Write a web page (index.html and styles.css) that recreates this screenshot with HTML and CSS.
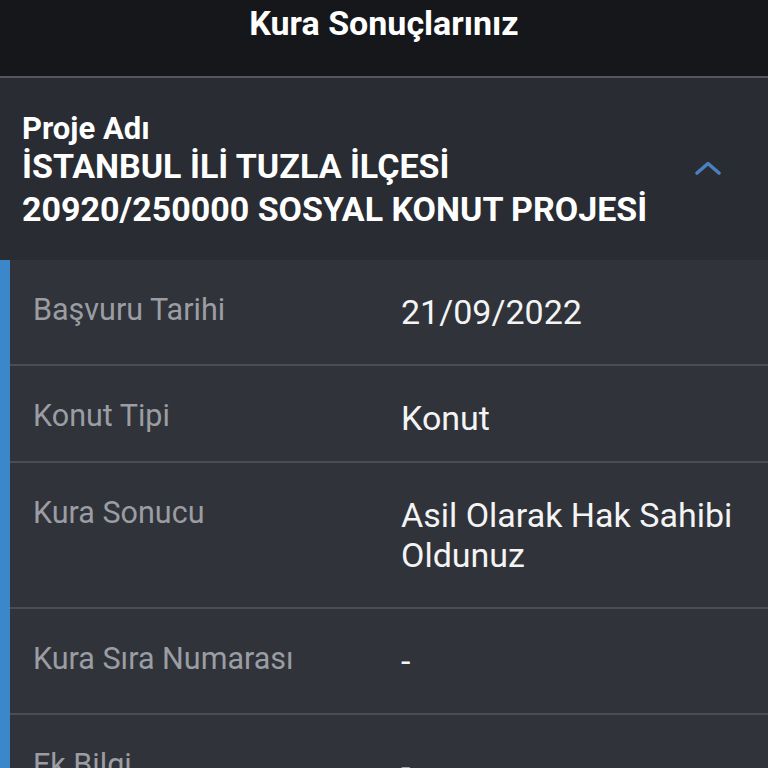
FILE: index.html
```html
<!DOCTYPE html>
<html lang="tr">
<head>
<meta charset="utf-8">
<title>Kura Sonuçlarınız</title>
<link rel="stylesheet" href="styles.css">
</head>
<body>
<header class="topbar">
  <h1 class="topbar-title">Kura Sonuçlarınız</h1>
</header>
<section class="project">
  <div class="project-text">
    <div class="project-label">Proje Adı</div>
    <div class="project-name">İSTANBUL İLİ TUZLA İLÇESİ<br>20920/250000 SOSYAL KONUT PROJESİ</div>
  </div>
  <svg class="chevron" width="28" height="16" viewBox="0 0 28 16" aria-hidden="true">
    <path d="M3 13 L14 3.5 L25 13" fill="none" stroke="#4a80bf" stroke-width="3.6" stroke-linecap="round" stroke-linejoin="round"/>
  </svg>
</section>
<section class="details">
  <div class="row">
    <div class="label">Başvuru Tarihi</div>
    <div class="value">21/09/2022</div>
  </div>
  <div class="row row--tight">
    <div class="label">Konut Tipi</div>
    <div class="value">Konut</div>
  </div>
  <div class="row">
    <div class="label">Kura Sonucu</div>
    <div class="value">Asil Olarak Hak Sahibi Oldunuz</div>
  </div>
  <div class="row">
    <div class="label">Kura Sıra Numarası</div>
    <div class="value">-</div>
  </div>
  <div class="row">
    <div class="label">Ek Bilgi</div>
    <div class="value">-</div>
  </div>
</section>
</body>
</html>
```

FILE: styles.css
```css
html, body {
  margin: 0;
  padding: 0;
  background: #30333a;
  font-family: Roboto, "Noto Sans", "Liberation Sans", sans-serif;
  color: #f2f2f2;
}

.topbar {
  background: #16171b;
  height: 76px;
  border-bottom: 2px solid #55575c;
  box-sizing: content-box;
  display: flex;
  justify-content: center;
}

.topbar-title {
  margin: 0;
  padding-top: 3px;
  font-size: 34px;
  line-height: 40px;
  font-weight: 700;
  color: #ffffff;
}

.project {
  background: #292c32;
  padding: 34px 46px 29px 22px;
  display: flex;
  align-items: center;
  justify-content: space-between;
}

.project-label {
  font-size: 31px;
  line-height: 33px;
  font-weight: 700;
  color: #ffffff;
}

.project-name {
  font-size: 34px;
  line-height: 43px;
  font-weight: 700;
  color: #ffffff;
}

.chevron {
  display: block;
  margin-bottom: 8px;
  flex-shrink: 0;
}

.details {
  border-left: 10px solid #3c87c9;
  background: #30333a;
}

.row {
  display: grid;
  grid-template-columns: 368px 1fr;
  padding: 32px 20px 32px 23px;
  border-bottom: 2px solid #4a4d54;
}

.row--tight {
  padding-bottom: 23px;
}

.label {
  font-size: 30.5px;
  line-height: 36px;
  color: #9b9da2;
}

.value {
  font-size: 34px;
  line-height: 40px;
  color: #f4f4f4;
}
```
